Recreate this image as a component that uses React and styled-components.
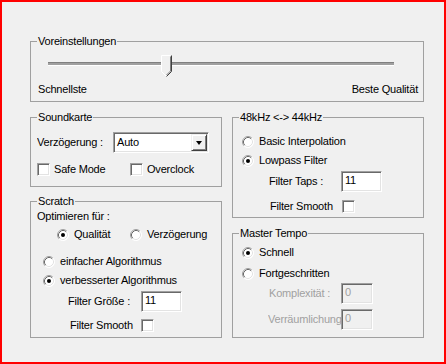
import React from "react";
import styled, { createGlobalStyle } from "styled-components";

const Global = createGlobalStyle`
  html, body { margin: 0; padding: 0; background: #fff; }
  body { font-family: "Liberation Sans", Arial, sans-serif; font-size: 11px; }
`;

const Window = styled.div`
  width: 446px;
  height: 364px;
  box-sizing: border-box;
  border: 2px solid #ff0000;
  background: #f0f0f0;
  padding: 33px 20px 0 28px;
  display: flex;
  flex-direction: column;
  gap: 9px;
  color: #000;
  font-family: "Liberation Sans", Arial, sans-serif;
  font-size: 11px;
  line-height: 13px;
  letter-spacing: -0.2px;
`;

const Columns = styled.div`
  display: grid;
  grid-template-columns: 192px 192px;
  column-gap: 10px;
`;

const Column = styled.div`
  display: flex;
  flex-direction: column;
  gap: ${(p) => p.$gap}px;
`;

const Group = styled.fieldset`
  margin: 0;
  padding: 0;
  border: 1px solid #a0a0a0;
  box-sizing: border-box;
  height: ${(p) => p.$h}px;
  min-width: 0;
`;

const Legend = styled.legend`
  margin-left: 6px;
  padding: 0 1px;
  font-size: 11px;
  line-height: 13px;
`;

const Body = styled.div`
  display: flex;
  flex-direction: column;
`;

const Row = styled.div`
  display: flex;
  align-items: center;
  height: ${(p) => p.$h || 13}px;
  margin-top: ${(p) => p.$mt || 0}px;
  padding-left: ${(p) => p.$indent || 0}px;
  padding-right: ${(p) => p.$right || 0}px;
  justify-content: ${(p) => p.$justify || "flex-start"};
  white-space: nowrap;
`;

const Label = styled.span`
  flex: none;
  width: ${(p) => (p.$w ? `${p.$w}px` : "auto")};
  overflow: hidden;
  white-space: nowrap;
  color: ${(p) => (p.$disabled ? "#a0a0a0" : "#000")};
`;

const SliderArea = styled.div`
  position: relative;
  height: 22px;
  width: 346px;
  margin: 7px 0 0 17px;
`;

const Track = styled.div`
  margin-top: 7px;
  height: 2px;
  background: #a0a0a0;
  border-top: 1px solid #808080;
  border-bottom: 1px solid #fff;
`;

const Thumb = styled.svg`
  position: absolute;
  left: 113px;
  top: 0;
`;

const Field = styled.div`
  flex: none;
  box-sizing: border-box;
  width: ${(p) => p.$w}px;
  height: 21px;
  background: ${(p) => (p.$disabled ? "#f0f0f0" : "#fff")};
  color: ${(p) => (p.$disabled ? "#a0a0a0" : "#000")};
  border: 1px solid;
  border-color: #a0a0a0 #fff #fff #a0a0a0;
  box-shadow: inset 1px 1px #696969, inset -1px -1px #e3e3e3;
  padding: 2px 3px 0;
  line-height: 13px;
`;

const Select = styled.div`
  flex: none;
  box-sizing: border-box;
  width: ${(p) => p.$w}px;
  height: 21px;
  background: #fff;
  border: 1px solid;
  border-color: #a0a0a0 #fff #fff #a0a0a0;
  box-shadow: inset 1px 1px #696969, inset -1px -1px #e3e3e3;
  padding: 1px;
  display: flex;
  align-items: center;
  justify-content: space-between;
`;

const SelectText = styled.span`
  padding-left: 2px;
`;

const DropButton = styled.div`
  box-sizing: border-box;
  width: 16px;
  height: 17px;
  background: #f0f0f0;
  border: 1px solid;
  border-color: #f0f0f0 #404040 #404040 #f0f0f0;
  box-shadow: inset 1px 1px #fff, inset -1px -1px #808080;
  display: flex;
  align-items: center;
  justify-content: center;
`;

const Arrow = styled.div`
  width: 0;
  height: 0;
  border-left: 3.5px solid transparent;
  border-right: 3.5px solid transparent;
  border-top: 4px solid #000;
  margin-top: 1px;
`;

const Box = styled.div`
  flex: none;
  box-sizing: border-box;
  width: 13px;
  height: 13px;
  background: #fff;
  border: 1px solid;
  border-color: #a0a0a0 #fff #fff #a0a0a0;
  box-shadow: inset 1px 1px #696969, inset -1px -1px #e3e3e3;
`;

const Item = styled.div`
  flex: none;
  display: flex;
  align-items: center;
  width: ${(p) => (p.$w ? `${p.$w}px` : "auto")};
`;

const ItemText = styled.span`
  margin-left: ${(p) => p.$gap || 5}px;
`;

const RadioIcon = ({ checked }) => (
  <svg width="12" height="12" viewBox="0 0 12 12">
    <circle cx="6" cy="6" r="5.5" fill="#fff" />
    <path d="M2.11 9.89 A5.5 5.5 0 0 1 9.89 2.11" stroke="#a0a0a0" fill="none" />
    <path d="M2.82 9.18 A4.5 4.5 0 0 1 9.18 2.82" stroke="#696969" fill="none" />
    <path d="M9.89 2.11 A5.5 5.5 0 0 1 2.11 9.89" stroke="#fff" fill="none" />
    <path d="M9.18 2.82 A4.5 4.5 0 0 1 2.82 9.18" stroke="#e3e3e3" fill="none" />
    {checked && <circle cx="6" cy="6" r="2" fill="#000" />}
  </svg>
);

const Radio = ({ checked, children, w }) => (
  <Item $w={w}>
    <RadioIcon checked={checked} />
    <ItemText $gap={5}>{children}</ItemText>
  </Item>
);

const Check = ({ children, w }) => (
  <Item $w={w}>
    <Box />
    <ItemText $gap={4}>{children}</ItemText>
  </Item>
);

export default function App() {
  return (
    <>
      <Global />
      <Window>
        <Group $h={67}>
          <Legend>Voreinstellungen</Legend>
          <Body>
            <SliderArea>
              <Track />
              <Thumb width="11" height="22" viewBox="0 0 11 22">
                <path d="M0.5 16.5 V0.5 H10.5 V16.5 L5.5 21.5 Z" fill="#f0f0f0" />
                <path d="M0.5 16.5 V0.5 H9.5" stroke="#fff" fill="none" />
                <path d="M0.5 16.5 L5.5 21.5" stroke="#fff" fill="none" />
                <path d="M10.5 0.5 V16.5 L5.5 21.5" stroke="#404040" fill="none" />
                <path d="M9.5 1.5 V16 L5.5 20" stroke="#808080" fill="none" />
              </Thumb>
            </SliderArea>
            <Row $mt={6} $indent={7} $right={5} $justify="space-between">
              <span>Schnellste</span>
              <span>Beste Qualität</span>
            </Row>
          </Body>
        </Group>

        <Columns>
          <Column $gap={8}>
            <Group $h={76}>
              <Legend>Soundkarte</Legend>
              <Body>
                <Row $mt={8} $h={21} $indent={6}>
                  <Label $w={76}>Verzögerung :</Label>
                  <Select $w={96}>
                    <SelectText>Auto</SelectText>
                    <DropButton>
                      <Arrow />
                    </DropButton>
                  </Select>
                </Row>
                <Row $mt={10} $indent={6}>
                  <Check w={93}>Safe Mode</Check>
                  <Check>Overclock</Check>
                </Row>
              </Body>
            </Group>

            <Group $h={143}>
              <Legend>Scratch</Legend>
              <Body>
                <Row $mt={2} $indent={6}>
                  <span>Optimieren für :</span>
                </Row>
                <Row $mt={5} $indent={26}>
                  <Radio checked w={73}>Qualität</Radio>
                  <Radio>Verzögerung</Radio>
                </Row>
                <Row $mt={14} $indent={12}>
                  <Radio>einfacher Algorithmus</Radio>
                </Row>
                <Row $mt={6} $indent={12}>
                  <Radio checked>verbesserter Algorithmus</Radio>
                </Row>
                <Row $mt={4} $h={21} $indent={37}>
                  <Label $w={73}>Filter Größe :</Label>
                  <Field $w={41}>11</Field>
                </Row>
                <Row $mt={7} $indent={39}>
                  <Label $w={71}>Filter Smooth</Label>
                  <Box />
                </Row>
              </Body>
            </Group>
          </Column>

          <Column $gap={9}>
            <Group $h={107}>
              <Legend>48kHz &lt;-&gt; 44kHz</Legend>
              <Body>
                <Row $mt={11} $indent={9}>
                  <Radio>Basic Interpolation</Radio>
                </Row>
                <Row $mt={6} $indent={9}>
                  <Radio checked>Lowpass Filter</Radio>
                </Row>
                <Row $mt={4} $h={21} $indent={36}>
                  <Label $w={72}>Filter Taps :</Label>
                  <Field $w={41}>11</Field>
                </Row>
                <Row $mt={8} $indent={37}>
                  <Label $w={72}>Filter Smooth</Label>
                  <Box />
                </Row>
              </Body>
            </Group>

            <Group $h={111}>
              <Legend>Master Tempo</Legend>
              <Body>
                <Row $mt={6} $indent={9}>
                  <Radio checked>Schnell</Radio>
                </Row>
                <Row $mt={8} $indent={9}>
                  <Radio>Fortgeschritten</Radio>
                </Row>
                <Row $mt={3} $h={21} $indent={36}>
                  <Label $w={72} $disabled>Komplexität :</Label>
                  <Field $w={32} $disabled>0</Field>
                </Row>
                <Row $mt={5} $h={21} $indent={35}>
                  <Label $w={73} $disabled>Verräumlichung</Label>
                  <Field $w={32} $disabled>0</Field>
                </Row>
              </Body>
            </Group>
          </Column>
        </Columns>
      </Window>
    </>
  );
}
